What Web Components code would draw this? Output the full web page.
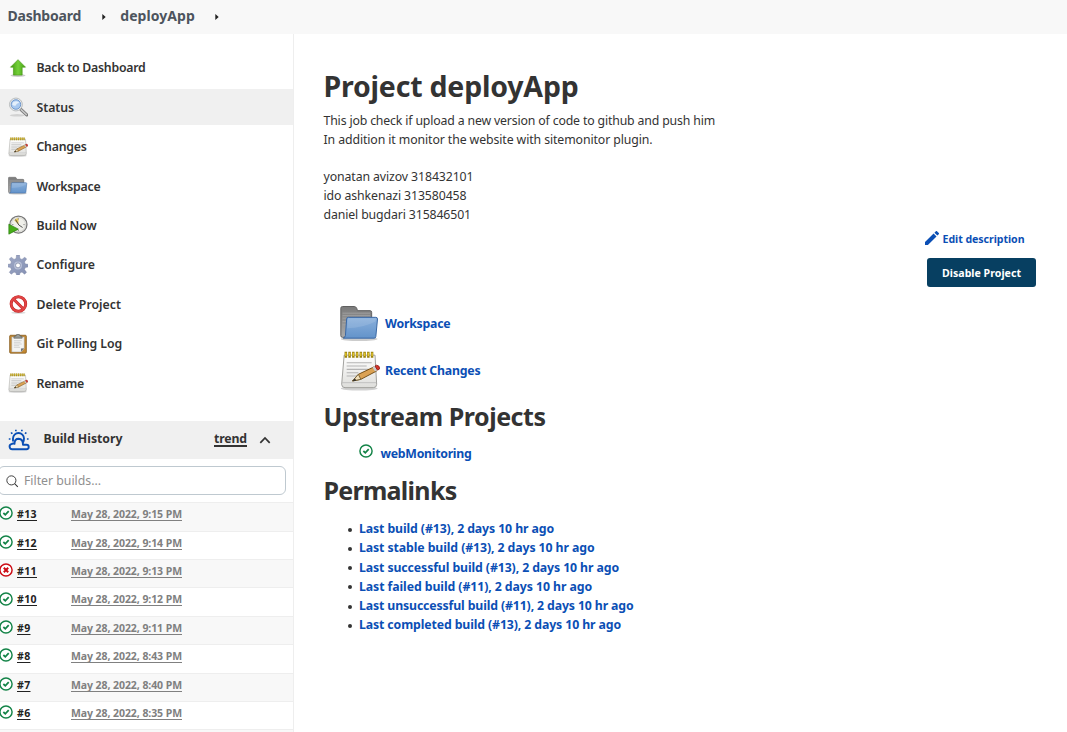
<!DOCTYPE html>
<html lang="en">
<head>
<meta charset="utf-8">
<title>deployApp [Jenkins]</title>
<style>
html,body{margin:0;height:100%;overflow:hidden;background:#fff;color:#333;font-family:"Noto Sans","Open Sans",sans-serif}
</style>
</head>
<body>
<jenkins-page></jenkins-page>
<script>
const define = (name, html, setup) => {
  const t = document.createElement('template');
  t.innerHTML = html;
  customElements.define(name, class extends HTMLElement {
    connectedCallback() {
      if (this.shadowRoot) return;
      this.attachShadow({mode: 'open'}).appendChild(t.content.cloneNode(true));
      if (setup) setup.call(this, this.shadowRoot);
    }
  });
};

const notepad = `<defs><linearGradient id="p" x2="0" y2="1"><stop stop-color="#fff"/><stop offset="1" stop-color="#dededb"/></linearGradient></defs>
<ellipse cx="23" cy="45" rx="22" ry="2.500" fill="#000" opacity=".18"/>
<path d="M5 5h37l2 35q0 4-4 4H6q-4 0-4-4z" fill="url(#p)" stroke="#999996" stroke-width="1.100"/>
<path d="M2.500 38h41" stroke="#bbb"/>
<path d="M8 14h30M8 18h24M8 22h27M8 26h14M8 30h12" stroke="#b4b4b4" stroke-width="1.300"/>
<path d="M7 1v7M11.500 1v7M16 1v7M20.500 1v7M25 1v7M29.500 1v7M34 1v7M38.500 1v7" stroke="#9a820f" stroke-width="3"/>
<path d="M7 2v4M11.500 2v4M16 2v4M20.500 2v4M25 2v4M29.500 2v4M34 2v4M38.500 2v4" stroke="#e2c52c" stroke-width="1.700"/>
<path d="M15 36l7-8 19-9 3 5-19 10z" fill="#dba254" stroke="#6c4710" stroke-width="1.100"/>
<path d="M22 28l3 6-10 2z" fill="#f2dfb9" stroke="#6c5a30"/><path d="M15 36l3-3 1.500 2.400z" fill="#222"/>
<path d="M39 19.500l3-1.500 3 5-3 1.500z" fill="#ccc"/><path d="M42 18l2-1q4 .5 3.500 4.500l-2.500 1.500z" fill="#d8342a" stroke="#8c1912"/>`;
const ICONS = {
  up: ['0 0 48 48', `<defs><linearGradient id="g"><stop stop-color="#3f9b0d"/><stop offset=".5" stop-color="#74cf3a"/><stop offset="1" stop-color="#45a312"/></linearGradient></defs><ellipse cx="24" cy="42" rx="18" ry="3.500" fill="#000" opacity=".2"/><path d="M24 4L42 22H34V41H13V22H6z" fill="url(#g)" stroke="#459313" stroke-width="1.500"/>`],
  search: ['0 0 48 48', `<ellipse cx="22" cy="44" rx="18" ry="3" fill="#000" opacity=".12"/><path d="M31 30l14 13" stroke="#777" stroke-width="7.500" stroke-linecap="round"/><path d="M32 31l12 11" stroke="#c8c8c8" stroke-width="4" stroke-linecap="round"/><circle cx="19" cy="18" r="15.500" fill="#e9ebec" stroke="#a9adae" stroke-width="1.800"/><circle cx="19" cy="18" r="11.500" fill="#a9c9f0" stroke="#628bc4" stroke-width="2"/><path d="M10 18q1-8 10-8 5 0 7 4-7 1-9 7-5 1-8-3z" fill="#e4effb"/>`],
  notepad: ['0 0 48 48', notepad],
  folder: ['0 0 48 48', `<defs><linearGradient id="f" x2="0" y2="1"><stop stop-color="#8ab0dc"/><stop offset="1" stop-color="#6393ca"/></linearGradient><linearGradient id="b" x2="0" y2="1"><stop stop-color="#7a7a7a"/><stop offset="1" stop-color="#aaa"/></linearGradient></defs><ellipse cx="23" cy="42" rx="22" ry="2.500" fill="#000" opacity=".2"/><path d="M1 5q0-2 2-2h14q2 0 3 2l1 3h15q2 0 2 2v30H3q-2 0-2-2z" fill="url(#b)" stroke="#606060" stroke-width="1.200"/><path d="M3 11h33M3 14h33M3 17h5M3 21h4M3 25h4" stroke="#aaa" stroke-width=".8"/><path d="M8 18q0-2 2-2h33q2 0 2 2l-2 21q0 2-2 2H4q2-1 2.500-3z" fill="url(#f)" stroke="#3a68a4" stroke-width="1.200"/><path d="M8.500 29q19 0 34-8l.7-4H9.500z" fill="#fff" opacity=".12"/>`],
  clock: ['0 0 48 48', `<circle cx="25" cy="23" r="20.500" fill="#f0f0ea" stroke="#777" stroke-width="3"/><circle cx="25" cy="23" r="17" fill="none" stroke="#d0d0cc" stroke-width="2"/><path d="M25 23L15 13A15 15 0 0 1 25 7z" fill="#e5c65a"/><path d="M25 8v3M25 36v3M10 23h3M37 23h3" stroke="#777" stroke-width="2"/><path d="M18 11l8 13 9 6" fill="none" stroke="#444" stroke-width="2.200"/><path d="M2 22L25 34 2 46z" fill="#47ad19" stroke="#23790a" stroke-width="1.500"/>`],
  gear: ['0 0 48 48', `<defs><linearGradient id="m" x2="1" y2="1"><stop stop-color="#9fa9c6"/><stop offset="1" stop-color="#8490b3"/></linearGradient></defs><g fill="url(#m)" stroke="#737d9d" stroke-width="1"><path d="M20.500 0h7l1 8.500 5 2 6.700-5.300 4.600 4.600-5.300 6.700 2 5 8 1v6l-8 1.500-2 5 5 6.500-4.600 4.600-6.400-5-5 2-1 5h-7l-1-5-5-2-6.700 5-4.600-4.600 5-6.500-2-5-7.700-1.500v-6l7.700-1 2-5-5-6.700 4.600-4.600 6.700 5.300 5-2z"/></g><circle cx="24" cy="25" r="9.500" fill="#b9c1d8"/><circle cx="24" cy="25" r="5.800" fill="#fff" stroke="#6f7897" stroke-width="1.500"/>`],
  no: ['0 0 48 48', `<ellipse cx="25" cy="45" rx="17" ry="2.500" fill="#000" opacity=".15"/><g fill="none"><circle cx="25" cy="24" r="17.500" fill="#fff" stroke="#c02020" stroke-width="7"/><path d="M13 12l24 24" stroke="#c02020" stroke-width="7"/><circle cx="25" cy="24" r="17.500" stroke="#e04545" stroke-width="5"/><path d="M13 12l24 24" stroke="#e04545" stroke-width="5"/></g>`],
  clip: ['0 0 48 48', `<rect x="4" y="3" width="40" height="43" rx="2.500" fill="#c48a34" stroke="#805516" stroke-width="1.800"/><path d="M9 7h30v28l-7 8H9z" fill="#f4f4f2" stroke="#999"/><path d="M39 34l-8 9v-8z" fill="#6e7277"/><path d="M14 16h19M14 20h16M14 24h19M14 28h13M14 32h15" stroke="#c0c0c0" stroke-width="1.500"/><path d="M14 8q0-3 3-3h2q1-5 5-5t5 5h2q3 0 3 3v2H14z" fill="#9a9c97" stroke="#565854" stroke-width="1.500"/>`],
  ok: ['0 0 16 16', `<circle cx="8" cy="8" r="6.950" fill="#fff" stroke="#138347" stroke-width="1.650"/><path d="M5 8l2.200 2.100 3.900-4.200" fill="none" stroke="#138347" stroke-width="2"/>`],
  fail: ['0 0 16 16', `<circle cx="8" cy="8" r="6.950" fill="#fff" stroke="#cc0b14" stroke-width="1.650"/><path d="M5.500 5.500l5 5M10.500 5.500l-5 5" stroke="#cc0b14" stroke-width="2.300"/>`],
  weather: ['0 0 22 22', `<g fill="none" stroke="#0b4fb5" stroke-width="1.900" stroke-linejoin="round"><path d="M5 12.500V9.500a5.500 5.500 0 0 1 11 0q0 2-1 4"/><path d="M4.200 20.200a2.600 2.600 0 0 1-1-5q1.700-1 3.300-.4 0-5 4.200-5 4.300.2 4.300 6h3.500a2.200 2.200 0 0 1 0 4.400z" fill="#f0f0f0"/></g><path d="M7 .7h1.700v1.600H7zM13 .7h1.700v1.600H13zM2.500 3.800l1.500-.9.900 1.500-1.500.9zM18.900 3.800l-1.500-.9-.9 1.500 1.500.9zM.8 9.300h1.700v1.500H.8zM18.900 9.300h1.700v1.500h-1.700z" fill="#0b4fb5"/>`],
  chevron: ['0 0 12 8', `<path d="M1.300 6.800L6 2l4.700 4.800" fill="none" stroke="#333" stroke-width="1.700"/>`],
  find: ['0 0 14 14', `<circle cx="5.800" cy="5.800" r="4.900" fill="none" stroke="#333"/><path d="M9.300 9.300l3.400 3.400" stroke="#333" stroke-width="1.100"/>`],
  pencil: ['3 3 18 18', `<path d="M3 17.250V21h3.750L17.810 9.940l-3.750-3.750L3 17.250zM20.710 7.040a1 1 0 0 0 0-1.410l-2.340-2.340a1 1 0 0 0-1.410 0l-1.830 1.830 3.750 3.750 1.830-1.830z" fill="#0b4fb5"/>`],
  arrow: ['0 0 4 6', `<path d="M.3 0L3.700 3 .3 6z" fill="#222"/>`]
};

define('ui-icon', `<style>:host{display:block;flex:none}svg{display:block;width:100%;height:100%}</style>`, function (root) {
  const [box, body] = ICONS[this.getAttribute('name')];
  root.innerHTML += `<svg viewBox="${box}">${body}</svg>`;
});

// A single-line label whose tracking is set so that it spans the given width.
// --line is the thickness of an optional underline.
define('fit-text', `<style>:host{display:block;flex:none;white-space:nowrap}span{display:inline-block}:host([underline]) span{text-decoration:underline;text-decoration-thickness:var(--line,1px);text-underline-offset:2px;text-decoration-skip-ink:none}</style><span><slot></slot></span>`, function (root) {
  const w = +this.getAttribute('w'), s = root.querySelector('span');
  const n = this.textContent.length;
  s.style.letterSpacing = ((w - s.getBoundingClientRect().width) / n) + 'px';
});

define('crumb-bar', `<style>
:host{display:flex;align-items:center;height:34px;box-sizing:border-box;padding:0 0 3px 7.500px;background:#f8f8f8;font-size:14px;font-weight:700;color:#4d545d}
ui-icon{width:4px;height:6px;position:relative;top:1px}.a{margin:0 14px 0 21.300px}.b{margin-left:20.500px}
</style><fit-text w="73.500">Dashboard</fit-text><ui-icon class="a" name="arrow"></ui-icon><fit-text w="74.500">deployApp</fit-text><ui-icon class="b" name="arrow"></ui-icon>`);

define('task-link', `<style>
:host{display:flex;align-items:center;height:36px;margin-bottom:3.450px;padding-left:8px;gap:8.500px;font-size:12.300px;font-weight:600;color:#333}
:host([active]){background:#f0f0f0}ui-icon{width:20px;height:20px}
</style>`, function (root) {
  root.innerHTML += `<ui-icon name="${this.getAttribute('icon')}"></ui-icon><fit-text w="${this.getAttribute('w')}">${this.getAttribute('label')}</fit-text>`;
});

define('build-row', `<style>
:host{display:flex;height:28.430px;box-sizing:border-box;border-top:1px solid #eee;font-size:10.500px;font-weight:700;line-height:23px}
:host([odd]){background:#f8f8f8}
ui-icon{width:14px;height:14px;margin:3.300px 4px 0 -1px}
.n{width:54px;color:#222}.d{color:#808080}
</style>`, function (root) {
  const n = this.getAttribute('n');
  if (!n) return;
  root.innerHTML += `<ui-icon name="${this.hasAttribute('failed') ? 'fail' : 'ok'}"></ui-icon><fit-text underline class="n" w="${n.length > 1 ? 20 : 13.5}">#${n}</fit-text><fit-text underline class="d" w="111">May 28, 2022, ${this.getAttribute('time')} PM</fit-text>`;
});

define('build-history', `<style>
:host{display:block;overflow:hidden}
header{display:flex;align-items:center;height:38px;background:#f0f0f0;font-size:12.300px;font-weight:700;color:#333}
header>*{margin-bottom:3px}
.w{width:22px;height:22px;margin:0 13.500px 0 8px}.t{--line:2px;margin-left:91.500px;line-height:17px}
.c{width:12px;height:8px;margin:0 0 0 12px}
.f{display:flex;align-items:center;gap:5px;height:29px;width:288px;margin:7px 0 6.800px -2px;box-sizing:border-box;border:1.500px solid #bfc9d0;border-radius:6px;padding-left:7px;font-size:12.300px;color:#909090}
.f ui-icon{width:13px;height:13px;margin-top:2px}
</style><header><ui-icon class="w" name="weather"></ui-icon><fit-text w="79">Build History</fit-text><fit-text underline class="t" w="33">trend</fit-text><ui-icon class="c" name="chevron"></ui-icon></header>
<div class="f"><ui-icon name="find"></ui-icon><fit-text w="77">Filter builds...</fit-text></div>
<build-row odd n="13" time="9:15"></build-row><build-row n="12" time="9:14"></build-row><build-row odd failed n="11" time="9:13"></build-row><build-row n="10" time="9:12"></build-row><build-row odd n="9" time="9:11"></build-row><build-row n="8" time="8:43"></build-row><build-row odd n="7" time="8:40"></build-row><build-row n="6" time="8:35"></build-row><build-row odd></build-row>`);

define('side-panel', `<style>:host{display:block;width:293px;border-right:1px solid #eee;padding-top:15.700px;overflow:hidden}build-history{margin-top:20.100px}</style>
<task-link icon="up" label="Back to Dashboard" w="109"></task-link>
<task-link active icon="search" label="Status" w="37.500"></task-link>
<task-link icon="notepad" label="Changes" w="50"></task-link>
<task-link icon="folder" label="Workspace" w="64"></task-link>
<task-link icon="clock" label="Build Now" w="60"></task-link>
<task-link icon="gear" label="Configure" w="58.500"></task-link>
<task-link icon="no" label="Delete Project" w="84.500"></task-link>
<task-link icon="clip" label="Git Polling Log" w="85.500"></task-link>
<task-link icon="notepad" label="Rename" w="47.500"></task-link>
<build-history></build-history>`);

define('project-main', `<style>
:host{display:block;flex:1;padding:34px 31px 0 29.500px;font-size:12.300px;color:#333}
h1,h2,ul{margin:0;padding:0}h1{font-size:28.500px;line-height:36px}h2{font-size:25px;line-height:32px}
.desc{margin-top:8px;line-height:18.750px;height:111.500px}
.desc br{line-height:19px}
.tools{display:flex;flex-direction:column;align-items:flex-end;font-size:10.600px;font-weight:700}
.edit{display:flex;align-items:center;gap:3.500px;color:#0b4fb5;height:20px;margin:5px 11.500px 9.500px 0}
.edit ui-icon{width:14px;height:14px;margin-bottom:2px}
.btn{display:flex;align-items:center;justify-content:center;width:109px;height:29px;background:#073f61;color:#fff;border-radius:3px}
.links{margin:12.500px 0 6.500px}
.link{display:flex;align-items:center;gap:5.500px;height:47px;padding-left:16px;color:#0b4fb5;font-weight:700}
.link ui-icon{width:40px;height:40px;margin-top:1px}
.up{display:flex;align-items:center;gap:7.500px;margin:11.500px 0 10px 35.500px;height:20px;color:#0b4fb5;font-weight:700}
.up ui-icon{width:14px;height:14px;margin-bottom:5px}
ul{list-style:none;margin:13.600px 0 0 24.500px;color:#0b4fb5;font-weight:700;line-height:19.200px}
li{display:flex;align-items:center;gap:7px}li::before{content:"";width:4px;height:4px;border-radius:50%;background:#333;margin-top:2px}
</style>
<h1><fit-text w="255">Project deployApp</fit-text></h1>
<div class="desc"><fit-text w="391.500">This job check if upload a new version of code to github and push him</fit-text><fit-text w="329">In addition it monitor the website with sitemonitor plugin.</fit-text><br><fit-text w="150">yonatan avizov 318432101</fit-text><fit-text w="143">ido ashkenazi 313580458</fit-text><fit-text w="147.500">daniel bugdari 315846501</fit-text></div>
<div class="tools"><div class="edit"><ui-icon name="pencil"></ui-icon><fit-text w="82">Edit description</fit-text></div><div class="btn"><fit-text w="79">Disable Project</fit-text></div></div>
<div class="links"><div class="link"><ui-icon name="folder"></ui-icon><fit-text w="65.500">Workspace</fit-text></div>
<div class="link"><ui-icon name="notepad"></ui-icon><fit-text w="95.500">Recent Changes</fit-text></div></div>
<h2><fit-text w="222">Upstream Projects</fit-text></h2>
<div class="up"><ui-icon name="ok"></ui-icon><fit-text w="91">webMonitoring</fit-text></div>
<h2><fit-text w="133">Permalinks</fit-text></h2>
<ul><li><fit-text w="195">Last build (#13), 2 days 10 hr ago</fit-text></li><li><fit-text w="235.500">Last stable build (#13), 2 days 10 hr ago</fit-text></li><li><fit-text w="260">Last successful build (#13), 2 days 10 hr ago</fit-text></li><li><fit-text w="233">Last failed build (#11), 2 days 10 hr ago</fit-text></li><li><fit-text w="274.500">Last unsuccessful build (#11), 2 days 10 hr ago</fit-text></li><li><fit-text w="262">Last completed build (#13), 2 days 10 hr ago</fit-text></li></ul>`);

define('jenkins-page', `<style>:host{display:flex;flex-direction:column;height:732px;overflow:hidden;background:#fff}.b{display:flex;flex:1;min-height:0}</style><crumb-bar></crumb-bar><div class="b"><side-panel></side-panel><project-main></project-main></div>`);
</script>
</body>
</html>
